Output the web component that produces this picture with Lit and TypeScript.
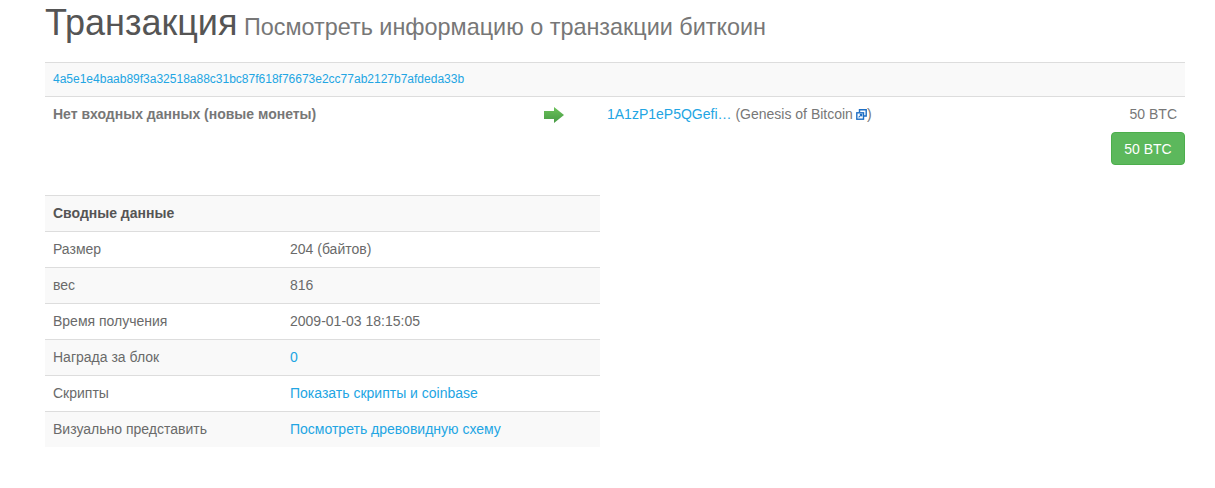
import { LitElement, html, css } from "lit";
import { customElement } from "lit/decorators.js";

@customElement("app-root")
export class AppRoot extends LitElement {
  static styles = css`
    :host { display: block; font-family: "Liberation Sans", Arial, sans-serif; font-size: 14px; line-height: 20px; color: #6a6a6a; background: #fff; height: 488px; box-sizing: border-box; padding: 0 30px 0 45px; overflow: hidden; }
    a { color: #22a5e3; text-decoration: none; }
    h1 { margin: 0; height: 62px; box-sizing: border-box; padding-top: 3px; font-size: 36px; line-height: 40px; font-weight: 400; color: #555; }
    h1 small { font-size: 23.4px; line-height: 1; color: #777; font-weight: 400; }
    .hash { height: 35px; box-sizing: border-box; border-top: 1px solid #ddd; border-bottom: 1px solid #ddd; background: #f9f9f9; padding: 6px 8px; font-size: 12px; line-height: 20px; }
    .tx { display: grid; grid-template-columns: 491px 63px 1fr auto; padding: 7px 8px 0; height: 35px; box-sizing: border-box; color: #777; }
    .arrow { display: block; width: 20px; height: 16px; margin-top: 3px; }
    .total { display: flex; justify-content: flex-end; }
    .btn { width: 74px; height: 33px; box-sizing: border-box; background: #5cb85c; border: 1px solid #4cae4c; border-radius: 4px; color: #fff; display: flex; align-items: center; justify-content: center; }
    .summary { width: 555px; margin-top: 30px; }
    .row { display: grid; grid-template-columns: 237px 1fr; height: 36px; box-sizing: border-box; border-top: 1px solid #ddd; padding: 7px 8px 0; }
    .row.alt { background: #f9f9f9; }
    .row.head { font-weight: 700; color: #555; }
    .ext { display: inline-block; width: 11px; height: 11px; vertical-align: -1px; margin-left: 3px; }
  `;

  render() {
    const rows: [string, unknown][] = [
      ["Размер", "204 (байтов)"],
      ["вес", "816"],
      ["Время получения", "2009-01-03 18:15:05"],
      ["Награда за блок", html`<a href="#">0</a>`],
      ["Скрипты", html`<a href="#">Показать скрипты и coinbase</a>`],
      ["Визуально представить", html`<a href="#">Посмотреть древовидную схему</a>`],
    ];
    return html`
      <h1>Транзакция<small> Посмотреть информацию о транзакции биткоин</small></h1>
      <div class="hash"><a href="#">4a5e1e4baab89f3a32518a88c31bc87f618f76673e2cc77ab2127b7afdeda33b</a></div>
      <div class="tx">
        <b>Нет входных данных (новые монеты)</b>
        <svg class="arrow" viewBox="0 0 20 16">
          <defs><linearGradient id="g" x1="0" y1="0" x2="0" y2="1"><stop offset="0" stop-color="#6cc25a"/><stop offset="1" stop-color="#479a45"/></linearGradient></defs>
          <path d="M0 4h10V0l10 8-10 8v-4H0z" fill="url(#g)"/>
        </svg>
        <span><a href="#">1A1zP1eP5QGefi…</a> (Genesis of Bitcoin<svg class="ext" viewBox="0 0 11 11" fill="none" stroke="#1f6fc4" stroke-width="1.4"><path d="M3.5 3.5V.8h6.7V7H7.5"/><rect x=".8" y="3.8" width="6.7" height="6.4" fill="#fff"/><path d="M2.6 8.4L5.6 5.6M3.8 5.4h2v2" stroke-width="1.1"/></svg>)</span>
        <span>50 BTC</span>
      </div>
      <div class="total"><span class="btn">50 BTC</span></div>
      <div class="summary">
        <div class="row alt head"><span>Сводные данные</span></div>
        ${rows.map(([k, v], i) => html`<div class="row ${i % 2 ? "alt" : ""}"><span>${k}</span><span>${v}</span></div>`)}
      </div>
    `;
  }
}
